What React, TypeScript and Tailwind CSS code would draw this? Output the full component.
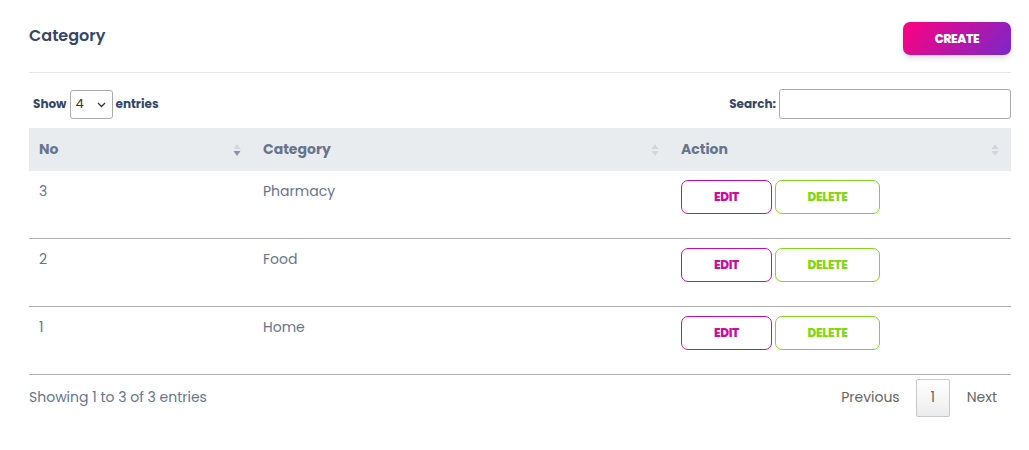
import { useState } from 'react';

const rows = [
  { no: 3, name: 'Pharmacy' },
  { no: 2, name: 'Food' },
  { no: 1, name: 'Home' },
];

function SortIcon({ active }: { active?: boolean }) {
  return (
    <svg width="8" height="14" viewBox="0 0 8 14" className="shrink-0">
      <path d="M4 1 L7.5 6 L0.5 6 Z" fill="#d3d6dc" />
      <path d="M4 13 L7.5 8 L0.5 8 Z" fill={active ? '#8a93a6' : '#d3d6dc'} />
    </svg>
  );
}

function Th({ label, active, className }: { label: string; active?: boolean; className?: string }) {
  return (
    <th className={`h-[43px] pl-[10px] pr-[12px] text-left align-middle font-bold text-[14px] text-[#67748e] ${className ?? ''}`}>
      <div className="flex items-center justify-between">
        <span>{label}</span>
        <SortIcon active={active} />
      </div>
    </th>
  );
}

export default function App() {
  const [search, setSearch] = useState('');
  const [perPage, setPerPage] = useState(4);
  const filtered = rows.filter((r) => r.name.toLowerCase().includes(search.toLowerCase()));

  return (
    <div className="w-[1029px] h-[450px] bg-white pl-[29px] pr-[18px] pt-[22px] font-['Poppins','Inter','Noto_Sans',sans-serif] text-[#67748e]">
      <div className="flex items-center justify-between h-[33px]">
        <h1 className="text-[16px] font-semibold text-[#344767] -mt-[5px]">Category</h1>
        <button className="w-[108px] h-[33px] rounded-[7px] bg-[linear-gradient(310deg,#7928ca,#ff0080)] text-white text-[12px] font-extrabold tracking-tight shadow-[0_4px_7px_-1px_rgba(0,0,0,0.11),0_2px_4px_-1px_rgba(0,0,0,0.07)]">
          CREATE
        </button>
      </div>
      <div className="mt-[17px] border-t border-[#e4e6ea]" />

      <div className="flex items-center justify-between mt-[16px] h-[30px] pl-[4px]">
        <label className="flex items-center gap-[3px] text-[12px] font-bold text-[#344767]">
          Show
          <div className="relative">
            <select
              value={perPage}
              onChange={(e) => setPerPage(Number(e.target.value))}
              className="appearance-none w-[43px] h-[29px] border border-[#aaaaaa] rounded-[3px] pl-[5px] text-[13px] font-normal text-[#333] bg-white"
            >
              {[4, 10, 25, 50].map((n) => <option key={n} value={n}>{n}</option>)}
            </select>
            <svg width="9" height="6" viewBox="0 0 9 6" className="absolute right-[7px] top-[12px] pointer-events-none">
              <path d="M1 1 L4.5 4.5 L8 1" stroke="#333" strokeWidth="1.3" fill="none" />
            </svg>
          </div>
          entries
        </label>
        <label className="flex items-center gap-[3px] text-[12px] font-bold text-[#344767]">
          Search:
          <input
            value={search}
            onChange={(e) => setSearch(e.target.value)}
            className="w-[232px] h-[30px] border border-[#aaaaaa] rounded-[3px] px-[5px] text-[13px] font-normal outline-none"
          />
        </label>
      </div>

      <table className="w-full mt-[9px] border-collapse table-fixed">
        <colgroup>
          <col className="w-[224px]" />
          <col className="w-[418px]" />
          <col />
        </colgroup>
        <thead className="bg-[#e9ecef]">
          <tr>
            <Th label="No" active />
            <Th label="Category" />
            <Th label="Action" className="pr-[10px]" />
          </tr>
        </thead>
        <tbody>
          {filtered.slice(0, perPage).map((r, i) => (
            <tr key={r.no} className={`${i === 0 ? 'h-[67px]' : 'h-[68px]'} border-b border-[#adadad] align-top`}>
              <td className="pl-[10px] pt-[10px] text-[14px]">{r.no}</td>
              <td className="pl-[10px] pt-[10px] text-[14px]">{r.name}</td>
              <td className="pl-[10px] pt-[9px]">
                <div className="flex gap-[3px]">
                  <button className="w-[91px] h-[34px] rounded-[7px] border border-[#cb0c9f] text-[#cb0c9f] text-[12px] font-extrabold tracking-tight">
                    EDIT
                  </button>
                  <button className="w-[105px] h-[34px] rounded-[7px] border border-[#82d616] text-[#82d616] text-[12px] font-extrabold tracking-tight">
                    DELETE
                  </button>
                </div>
              </td>
            </tr>
          ))}
        </tbody>
      </table>

      <div className="flex items-center justify-between mt-[4px]">
        <span className="text-[14px]">Showing 1 to {filtered.length} of {filtered.length} entries</span>
        <div className="flex items-center text-[14px] text-[#666]">
          <span className="px-[16px]">Previous</span>
          <span className="w-[34px] h-[38px] flex items-center justify-center border border-[#c9c9c9] rounded-[2px] bg-[linear-gradient(to_bottom,#ffffff,#ececec)] text-[#666]">
            1
          </span>
          <span className="pl-[17px] pr-[14px]">Next</span>
        </div>
      </div>
    </div>
  );
}
